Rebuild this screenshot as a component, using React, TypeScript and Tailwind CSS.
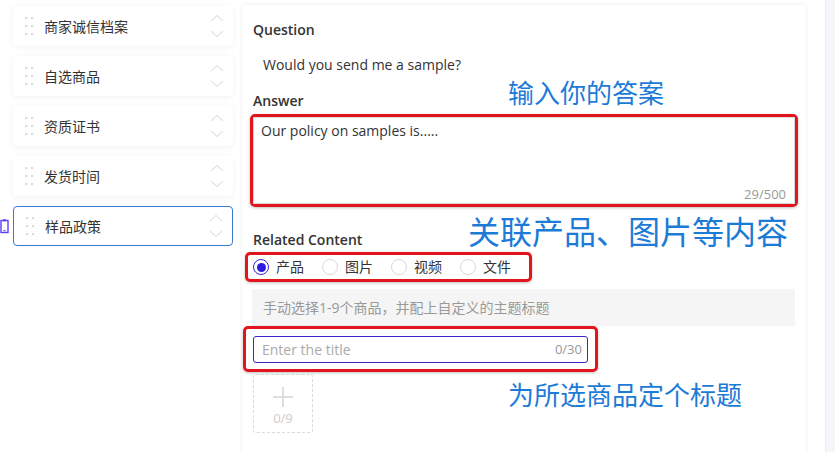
import React from "react";

const FONT = { fontFamily: '"Open Sans", "Noto Sans CJK SC", sans-serif' };
const CJK = { fontFamily: '"Noto Sans CJK SC", sans-serif' };

function Dots() {
  return (
    <svg width="10" height="20" viewBox="0 0 10 20" className="shrink-0">
      {[3, 11, 19].map((y) =>
        [2, 8].map((x) => <rect key={`${x}-${y}`} x={x - 1} y={y - 2} width="2.2" height="2.2" fill="#dcdcdc" />)
      )}
    </svg>
  );
}

function Arrows() {
  return (
    <svg width="14" height="24" viewBox="0 0 14 24" className="shrink-0">
      <polyline points="1,7 7,1.5 13,7" fill="none" stroke="#d4d4d4" strokeWidth="1" />
      <polyline points="1,17 7,22.5 13,17" fill="none" stroke="#d4d4d4" strokeWidth="1" />
    </svg>
  );
}

function PhoneIcon() {
  return (
    <svg width="9" height="15" viewBox="0 0 9 15">
      <rect x="1" y="1.5" width="7" height="12" fill="none" stroke="#5b3ff2" strokeWidth="1.4" />
      <rect x="3" y="0.3" width="3" height="2" fill="#5b3ff2" />
      <rect x="3.5" y="11" width="2" height="1.2" fill="#5b3ff2" />
    </svg>
  );
}

const items = ["商家诚信档案", "自选商品", "资质证书", "发货时间", "样品政策"];

function Radio({ checked, label }: { checked?: boolean; label: string }) {
  return (
    <div className="flex items-center">
      <div
        className={`w-[16px] h-[16px] rounded-full border flex items-center justify-center ${
          checked ? "border-[#3a22d6]" : "border-[#d9d9d9]"
        }`}
      >
        {checked && <div className="w-[9px] h-[9px] rounded-full bg-[#2f17e6]" />}
      </div>
      <span className="ml-[7px] text-[14px] leading-[18px] text-[#333]">{label}</span>
    </div>
  );
}

export default function App() {
  return (
    <div className="w-[835px] h-[452px] bg-white flex overflow-hidden" style={FONT}>
      {/* Left column */}
      <div className="w-[242px] shrink-0 pt-[6px] flex flex-col gap-[10px]">
        {items.map((t, i) => {
          const sel = i === items.length - 1;
          return (
            <div key={t} className="flex items-center">
              <div className="w-[13px] shrink-0 flex justify-start">{sel && <PhoneIcon />}</div>
              <div
                className={`w-[220px] h-[40px] rounded-[4px] bg-white flex items-center pl-[11px] pr-[9px] ${
                  sel ? "border border-[#3a78d6]" : "shadow-[0_1px_6px_rgba(0,0,0,0.06)]"
                }`}
              >
                <Dots />
                <span className="ml-[10px] text-[14px] text-[#333] flex-1">{t}</span>
                <Arrows />
              </div>
            </div>
          );
        })}
      </div>

      {/* Main panel */}
      <div className="w-[564px] shrink-0 mt-[5px] bg-white shadow-[0_0_4px_rgba(0,0,0,0.07)] px-[11px] pt-[16px] flex flex-col">
        <div className="text-[14px] leading-[18px] font-semibold text-[#333]">Question</div>
        <div className="mt-[17px] pl-[10px] text-[14px] leading-[18px] text-[#333]">Would you send me a sample?</div>

        <div className="mt-[6px] h-[30px] flex items-end">
          <div className="text-[14px] leading-[18px] font-semibold text-[#333] w-[255px]">Answer</div>
          <div className="text-[26px] leading-[30px] text-[#1d7bd8] relative top-[-3px]" style={CJK}>
            输入你的答案
          </div>
        </div>

        <div className="mt-[4px] -mx-[3px] h-[93px] border-[3px] border-[#e3151c] rounded-[5px] shadow-[0_1px_3px_rgba(0,0,0,0.25)]">
          <div className="h-full border border-[#d9d9d9] relative px-[7px] pt-[4px]">
            <div className="text-[14px] leading-[18px] text-[#333]">Our policy on samples is.....</div>
            <div className="absolute right-[8px] bottom-[0px] text-[13px] leading-[18px] text-[#999]">29/500</div>
          </div>
        </div>

        <div className="mt-[7px] h-[35px] flex items-end">
          <div className="text-[14px] leading-[18px] font-semibold text-[#333] w-[215px]">Related Content</div>
          <div className="text-[32px] leading-[36px] text-[#1d7bd8] relative top-[-1px]" style={CJK}>
            关联产品、图片等内容
          </div>
        </div>

        <div className="mt-[3px] -ml-[8px] w-[287px] h-[30px] border-[3px] border-[#e3151c] rounded-[5px] shadow-[0_1px_3px_rgba(0,0,0,0.25)] flex items-center pl-[5px] gap-[18px]">
          <Radio checked label="产品" />
          <Radio label="图片" />
          <Radio label="视频" />
          <Radio label="文件" />
        </div>

        <div className="mt-[7px] -ml-[1px] h-[37px] bg-[#f5f5f5] flex items-center pl-[11px] text-[14px] text-[#999]">
          手动选择1-9个商品，并配上自定义的主题标题
        </div>

        <div className="-ml-[10px] w-[355px] h-[46px] border-[3px] border-[#e3151c] rounded-[5px] shadow-[0_1px_3px_rgba(0,0,0,0.25)] px-[7px] pt-[7px]">
          <div className="h-[27px] border border-[#3d24c9] rounded-[3px] flex items-center justify-between pl-[8px] pr-[5px]">
            <span className="text-[14px] text-[#aaa]">Enter the title</span>
            <span className="text-[13px] text-[#999]">0/30</span>
          </div>
        </div>

        <div className="mt-[2px] flex items-start">
          <div className="w-[60px] h-[59px] border border-dashed border-[#d9d9d9] rounded-[3px] flex flex-col items-center pt-[12px]">
            <svg width="20" height="20" viewBox="0 0 20 20">
              <line x1="10" y1="0" x2="10" y2="20" stroke="#d6d6d6" strokeWidth="1.6" />
              <line x1="0" y1="10" x2="20" y2="10" stroke="#d6d6d6" strokeWidth="1.6" />
            </svg>
            <span className="text-[13px] leading-[16px] mt-[3px] text-[#ccc]">0/9</span>
          </div>
          <div className="ml-[195px] mt-[5px] text-[26px] leading-[30px] text-[#1d7bd8]" style={CJK}>
            为所选商品定个标题
          </div>
        </div>
      </div>

      {/* Right strip */}
      <div className="w-[19px] shrink-0" />
      <div className="flex-1 bg-[#f5f6fa] border-l border-[#eceef3]" />
    </div>
  );
}
